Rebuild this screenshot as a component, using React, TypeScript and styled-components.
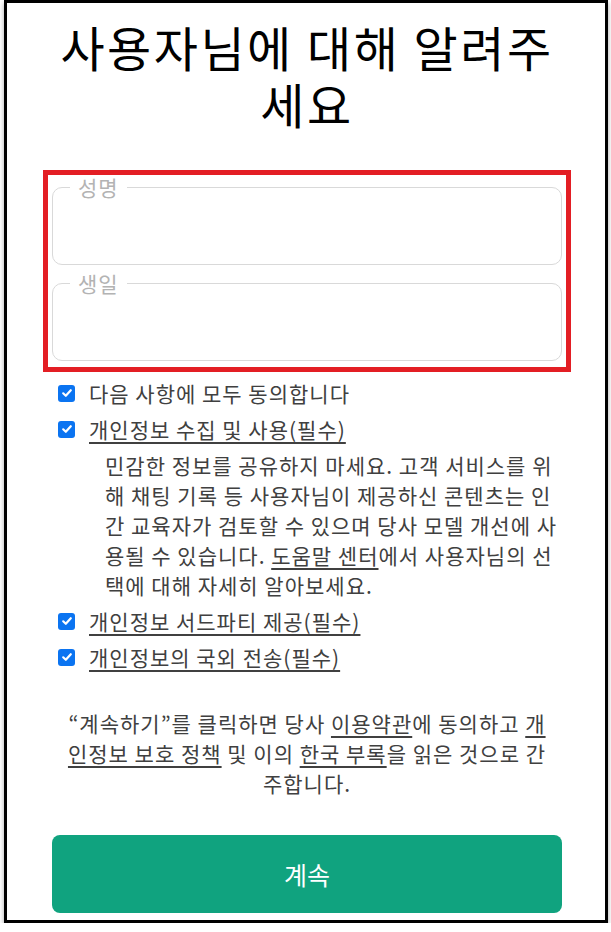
import React from 'react';
import styled, { createGlobalStyle } from 'styled-components';

const GlobalStyle = createGlobalStyle`
  html, body {
    margin: 0;
    padding: 0;
    background: #ffffff;
  }
  body {
    font-family: "Noto Sans CJK KR", "Noto Sans", sans-serif;
  }
`;

const Frame = styled.div`
  box-sizing: border-box;
  width: 604px;
  height: 923px;
  margin-left: 4px;
  border: 3px solid #000;
  box-shadow: 0 3px 5px rgba(0, 0, 0, 0.35);
  padding: 15px 43px 0 45px;
  display: flex;
  flex-direction: column;
`;

const Title = styled.h1`
  margin: 0;
  font-size: 48px;
  font-weight: 400;
  line-height: 57px;
  letter-spacing: 2.5px;
  text-align: center;
  color: #000;
`;

// red annotation box around the two fields
const Highlight = styled.div`
  margin: 38px -9px 0;
  padding: 0 4px 6px;
  border: 5px solid #e31e24;
  display: flex;
  flex-direction: column;
  gap: 6px;
`;

const Field = styled.fieldset`
  box-sizing: border-box;
  height: 90px;
  margin: 0;
  padding: 0 14px;
  border: 1px solid #d9d9d9;
  border-radius: 10px;
  min-inline-size: 0;
`;

const Legend = styled.legend`
  margin-left: 3px;
  padding: 0 8px;
  font-size: 21px;
  line-height: 24px;
  letter-spacing: 1px;
  color: #b3b3b3;
`;

const FieldInput = styled.input`
  width: 100%;
  height: 56px;
  border: none;
  outline: none;
  background: transparent;
  font: inherit;
  font-size: 20px;
`;

const ConsentList = styled.div`
  margin: 6px 0 0 6px;
  display: flex;
  flex-direction: column;
  gap: 6px;
`;

const Row = styled.label`
  display: flex;
  align-items: center;
  gap: 14px;
  font-size: 21px;
  line-height: 30px;
  letter-spacing: 1px;
  color: #404040;
`;

const Check = styled.span`
  flex-shrink: 0;
  width: 17px;
  height: 17px;
  border-radius: 3px;
  background: #0b74f1;
  display: flex;
  align-items: center;
  justify-content: center;
`;

const Note = styled.p`
  margin: 0;
  padding-left: 47px;
  font-size: 21px;
  line-height: 30px;
  letter-spacing: 1px;
  color: #404040;
`;

const Link = styled.a`
  color: inherit;
  text-decoration: underline;
  text-decoration-thickness: 1.5px;
  text-underline-offset: 4px;
`;

const Footer = styled.p`
  margin: 36px 0 0;
  padding: 0 13px;
  font-size: 21px;
  line-height: 30px;
  letter-spacing: 1px;
  text-align: center;
  color: #404040;
`;

const ContinueButton = styled.button`
  margin-top: 37px;
  height: 78px;
  border: none;
  border-radius: 8px;
  background: #10a37f;
  color: #fff;
  font-family: inherit;
  font-size: 25px;
  cursor: pointer;
`;

const CheckBox = () => (
  <Check>
    <svg width="12" height="12" viewBox="0 0 12 12">
      <polyline points="2.2,6.3 4.8,8.8 9.8,3.2" fill="none" stroke="#fff" strokeWidth="2.2" strokeLinecap="round" strokeLinejoin="round" />
    </svg>
  </Check>
);

export default function App() {
  return (
    <>
      <GlobalStyle />
      <Frame>
        <Title>사용자님에 대해 알려주세요</Title>
        <Highlight>
          <Field>
            <Legend>성명</Legend>
            <FieldInput />
          </Field>
          <Field>
            <Legend>생일</Legend>
            <FieldInput />
          </Field>
        </Highlight>
        <ConsentList>
          <Row>
            <CheckBox />
            다음 사항에 모두 동의합니다
          </Row>
          <Row>
            <CheckBox />
            <Link>개인정보 수집 및 사용(필수)</Link>
          </Row>
          <Note>
            민감한 정보를 공유하지 마세요. 고객 서비스를 위해 채팅 기록 등 사용자님이 제공하신 콘텐츠는 인간 교육자가 검토할 수 있으며 당사 모델 개선에 사용될 수 있습니다. <Link>도움말 센터</Link>에서 사용자님의 선택에 대해 자세히 알아보세요.
          </Note>
          <Row>
            <CheckBox />
            <Link>개인정보 서드파티 제공(필수)</Link>
          </Row>
          <Row>
            <CheckBox />
            <Link>개인정보의 국외 전송(필수)</Link>
          </Row>
        </ConsentList>
        <Footer>
          “계속하기”를 클릭하면 당사 <Link>이용약관</Link>에 동의하고 <Link>개인정보 보호 정책</Link> 및 이의 <Link>한국 부록</Link>을 읽은 것으로 간주합니다.
        </Footer>
        <ContinueButton>계속</ContinueButton>
      </Frame>
    </>
  );
}
